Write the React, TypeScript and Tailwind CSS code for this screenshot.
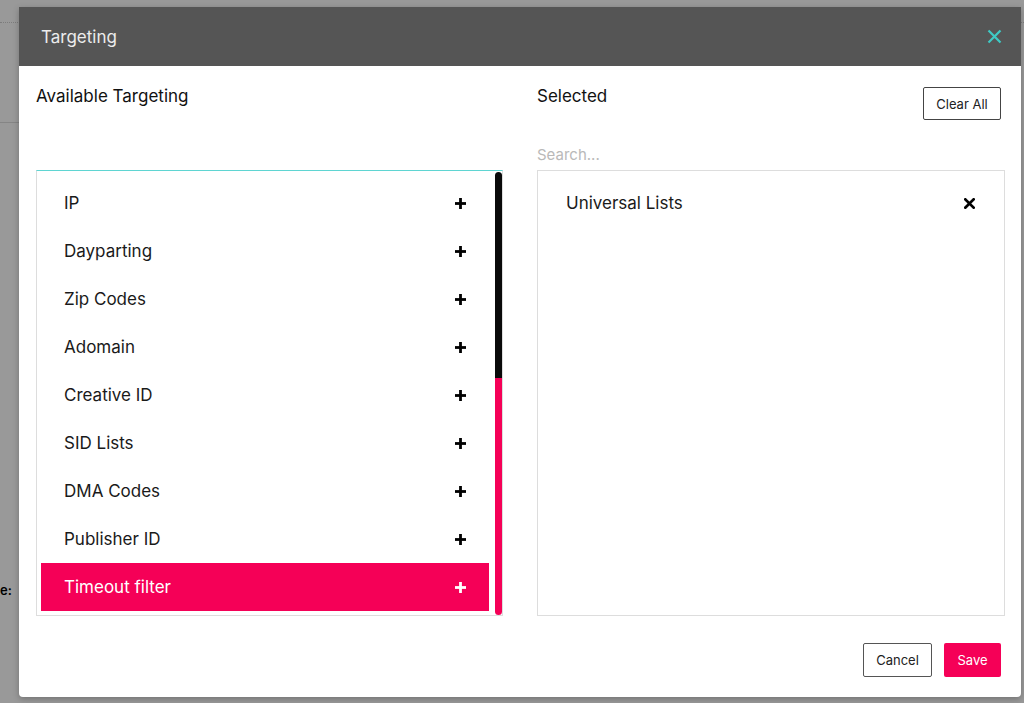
import React from 'react';

const available = [
  'IP',
  'Dayparting',
  'Zip Codes',
  'Adomain',
  'Creative ID',
  'SID Lists',
  'DMA Codes',
  'Publisher ID',
  'Timeout filter',
];

// thick plus glyph used on each row
const PlusIcon: React.FC<{ color?: string }> = ({ color = '#000' }) => (
  <svg width="11" height="11" viewBox="0 0 11 11">
    <rect x="4.1" y="0" width="2.8" height="11" fill={color} />
    <rect x="0" y="4.1" width="11" height="2.8" fill={color} />
  </svg>
);

const RemoveIcon: React.FC = () => (
  <svg width="11" height="11" viewBox="0 0 12 12">
    <path d="M1.5 1.5 L10.5 10.5 M10.5 1.5 L1.5 10.5" stroke="#000" strokeWidth="3" strokeLinecap="square" />
  </svg>
);

const App: React.FC = () => {
  const highlighted = 'Timeout filter';

  return (
    <div
      className="relative w-[1024px] h-[703px] overflow-hidden bg-[#999999]"
      style={{ fontFamily: 'Inter, "Noto Sans", "Liberation Sans", sans-serif' }}
    >
      {/* page behind the overlay */}
      <div className="absolute left-0 right-0 top-[22px] border-t border-dotted border-[#7c7c7c]" />
      <div className="absolute left-0 w-[19px] top-[122px] border-t border-[#858585]" />
      <div className="absolute left-0 top-[581px] text-[13px] font-semibold text-black">e:</div>

      {/* modal */}
      <div className="absolute left-[19px] top-[7px] w-[1002px] h-[690px] bg-white rounded-b-[4px] shadow-[0_2px_6px_rgba(0,0,0,0.25)] flex flex-col">
        {/* header */}
        <div className="h-[59px] bg-[#555555] flex items-center justify-between pl-[22px] pr-[19px] pt-[3px] shrink-0">
          <span className="text-[17px] text-[#ececec]">Targeting</span>
          <svg width="15" height="15" viewBox="0 0 15 15" className="-mt-[3px]">
            <path d="M1.5 1.5 L13.5 13.5 M13.5 1.5 L1.5 13.5" stroke="#3fc9c4" strokeWidth="2.2" />
          </svg>
        </div>

        {/* body */}
        <div className="flex gap-[34px] pl-[17px] pr-[16px]">
          {/* available */}
          <div className="w-[467px] flex flex-col">
            <div className="h-[104px] pt-[18px]">
              <h2 className="text-[17px] leading-[24px] text-[#111]">Available Targeting</h2>
            </div>
            <div className="h-[446px] border border-[#dddddd] border-t-[#5fd5d2] flex pl-[4px] pt-[1px]">
              <ul className="flex-1 pt-[7px]">
                {available.map((item) => {
                  const active = item === highlighted;
                  return (
                    <li
                      key={item}
                      className={
                        active
                          ? 'h-[48px] flex items-center justify-between pl-[23px] pr-[23px] pt-[1px] bg-[#f50057] text-white'
                          : 'h-[48px] flex items-center justify-between pl-[23px] pr-[23px] pt-[1px] text-[#1a1a1a]'
                      }
                    >
                      <span className="text-[17px]">{item}</span>
                      <PlusIcon color={active ? '#fff' : '#000'} />
                    </li>
                  );
                })}
              </ul>
              {/* scrollbar */}
              <div className="ml-[6px] w-[7px] flex flex-col">
                <div className="h-[206px] bg-[#0a0a0a] rounded-t-full" />
                <div className="flex-1 bg-[#f50057] rounded-b-full" />
              </div>
            </div>
          </div>

          {/* selected */}
          <div className="w-[468px] flex flex-col">
            <div className="h-[104px] flex flex-col">
              <div className="flex items-start justify-between pt-[18px] pr-[4px]">
                <h2 className="text-[17px] leading-[24px] text-[#111]">Selected</h2>
                <button className="mt-[3px] h-[33px] w-[78px] pt-[2px] border border-[#444] rounded-[2px] text-[13px] text-[#222] bg-white">
                  Clear All
                </button>
              </div>
              <input
                placeholder="Search..."
                className="mt-[21px] h-[26px] text-[15px] outline-none placeholder:text-[#b9b9b9] bg-transparent"
              />
            </div>
            <div className="h-[446px] border border-[#dddddd] pt-[8px]">
              <div className="h-[48px] flex items-center justify-between pl-[28px] pr-[29px] pt-[1px]">
                <span className="text-[17px] text-[#1a1a1a]">Universal Lists</span>
                <RemoveIcon />
              </div>
            </div>
          </div>
        </div>

        {/* footer */}
        <div className="flex justify-end gap-[12px] pr-[20px] mt-[27px]">
          <button className="h-[34px] w-[69px] pt-[2px] border border-[#555] rounded-[2px] text-[13px] text-[#222] bg-white">
            Cancel
          </button>
          <button className="h-[34px] w-[57px] pt-[2px] rounded-[2px] text-[13px] text-white bg-[#f50057]">
            Save
          </button>
        </div>
      </div>
    </div>
  );
};

export default App;
